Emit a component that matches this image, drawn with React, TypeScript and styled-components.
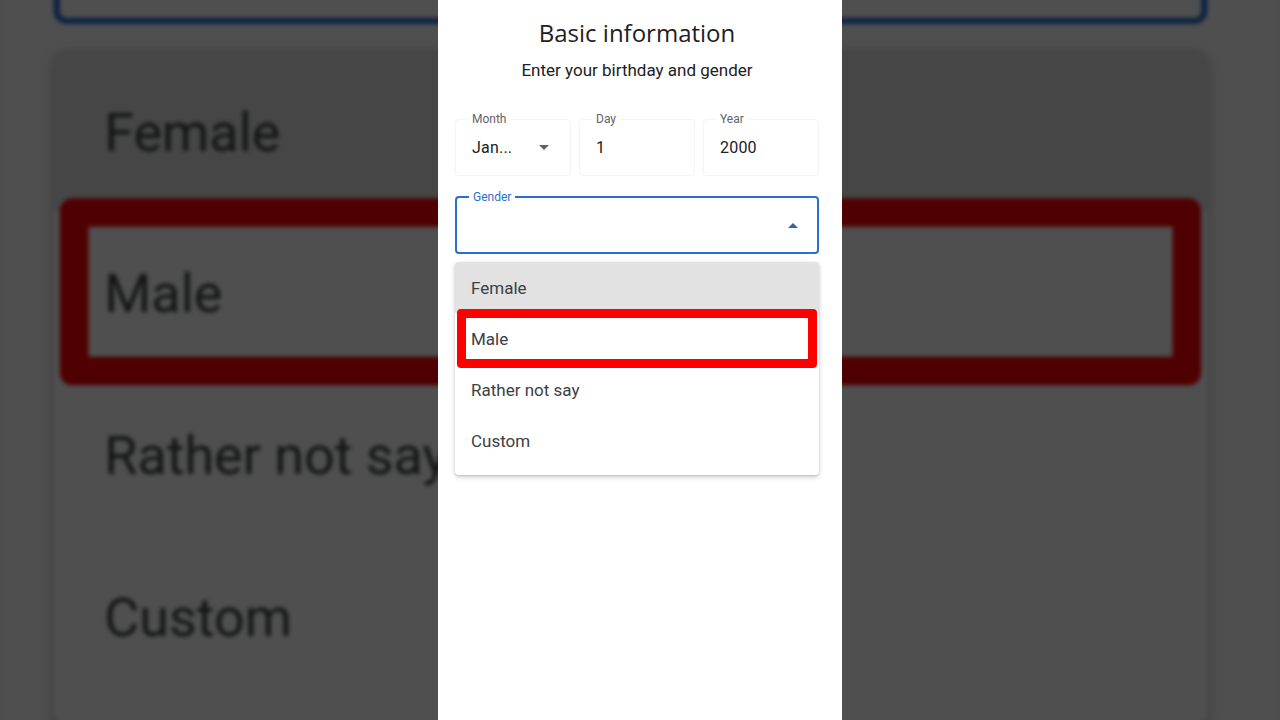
import styled, { createGlobalStyle } from "styled-components";

const GlobalStyle = createGlobalStyle`
  html, body {
    margin: 0;
    padding: 0;
    background: #4d4d4d;
    overflow: hidden;
  }
  * {
    box-sizing: border-box;
  }
`;

const Stage = styled.div`
  position: relative;
  width: 1280px;
  height: 720px;
  overflow: hidden;
  display: flex;
  justify-content: center;
  font-family: Roboto, "Noto Sans", Arial, sans-serif;
`;

/* blurred, zoomed copy of the phone that fills the sides of the video frame */
const Backdrop = styled.div`
  position: absolute;
  inset: 0;
  display: flex;
  justify-content: center;
  transform: scale(3.17);
  transform-origin: 640px 360px;
  filter: blur(0.6px) brightness(0.31);
  pointer-events: none;
`;

const Screen = styled.div`
  position: relative;
  width: 404px;
  height: 720px;
  background: #ffffff;
  display: flex;
  flex-direction: column;
  padding: 17px 23px 0 17px;
`;

const Title = styled.h1`
  margin: 0;
  font-family: "Open Sans", Roboto, sans-serif;
  font-size: 24px;
  line-height: 32px;
  font-weight: 400;
  color: #202124;
  text-align: center;
`;

const Subtitle = styled.p`
  margin: 9px 0 0;
  font-size: 17px;
  line-height: 24px;
  color: #202124;
  text-align: center;
`;

const DateRow = styled.div`
  display: grid;
  grid-template-columns: repeat(3, 1fr);
  gap: 8px;
  margin-top: 37px;
`;

const Field = styled.div<{ $focused?: boolean }>`
  position: relative;
  display: flex;
  align-items: center;
  justify-content: space-between;
  height: ${(p) => (p.$focused ? "58px" : "57px")};
  padding: 0 21px 0 ${(p) => (p.$focused ? "15px" : "16px")};
  border: ${(p) => (p.$focused ? "2px solid #2a6fcf" : "1px solid #f4f4f4")};
  border-radius: 4px;
`;

const FieldLabel = styled.span<{ $focused?: boolean }>`
  position: absolute;
  top: -8px;
  left: 12px;
  padding: 0 4px;
  background: #ffffff;
  font-size: 12px;
  line-height: 14px;
  color: ${(p) => (p.$focused ? "#2a6fcf" : "#5f6368")};
`;

const FieldValue = styled.span`
  font-size: 16px;
  line-height: 24px;
  color: #202124;
  letter-spacing: 0.2px;
`;

const GenderField = styled(Field)`
  margin-top: 20px;
  justify-content: flex-end;
  padding-right: 19px;
`;

const Caret = styled.span<{ $up?: boolean; $color: string }>`
  width: 0;
  height: 0;
  border-left: 5px solid transparent;
  border-right: 5px solid transparent;
  ${(p) =>
    p.$up
      ? `border-bottom: 5px solid ${p.$color};`
      : `border-top: 5px solid ${p.$color};`}
`;

const Menu = styled.ul`
  list-style: none;
  margin: 8px 0 0;
  padding: 0 0 9px;
  background: #ffffff;
  border-radius: 4px;
  box-shadow: 0 2px 5px rgba(0, 0, 0, 0.2), 0 1px 2px rgba(0, 0, 0, 0.1);
`;

const MenuItem = styled.li<{ $hovered?: boolean }>`
  position: relative;
  display: flex;
  align-items: center;
  height: 51px;
  padding: 0 16px;
  font-size: 17px;
  line-height: 24px;
  color: #3c4043;
  background: ${(p) => (p.$hovered ? "#e2e2e2" : "transparent")};
  border-radius: ${(p) => (p.$hovered ? "4px 4px 0 0" : "0")};
`;

/* red marker drawn on top of the video */
const Highlight = styled.span`
  position: absolute;
  top: -4px;
  bottom: -4px;
  left: 2px;
  right: 2px;
  border: 9px solid #ff0000;
  border-radius: 4px;
`;

const options = ["Female", "Male", "Rather not say", "Custom"];

const PhoneScreen = () => (
  <Screen>
    <Title>Basic information</Title>
    <Subtitle>Enter your birthday and gender</Subtitle>

    <DateRow>
      <Field>
        <FieldLabel>Month</FieldLabel>
        <FieldValue>Jan...</FieldValue>
        <Caret $color="#5f6368" />
      </Field>
      <Field>
        <FieldLabel>Day</FieldLabel>
        <FieldValue>1</FieldValue>
      </Field>
      <Field>
        <FieldLabel>Year</FieldLabel>
        <FieldValue>2000</FieldValue>
      </Field>
    </DateRow>

    <GenderField $focused>
      <FieldLabel $focused>Gender</FieldLabel>
      <Caret $up $color="#3b62a0" />
    </GenderField>

    <Menu>
      {options.map((option) => (
        <MenuItem key={option} $hovered={option === "Female"}>
          {option}
          {option === "Male" && <Highlight />}
        </MenuItem>
      ))}
    </Menu>
  </Screen>
);

const App = () => {
  return (
    <>
      <GlobalStyle />
      <Stage>
        <Backdrop aria-hidden="true">
          <PhoneScreen />
        </Backdrop>
        <PhoneScreen />
      </Stage>
    </>
  );
};

export default App;
